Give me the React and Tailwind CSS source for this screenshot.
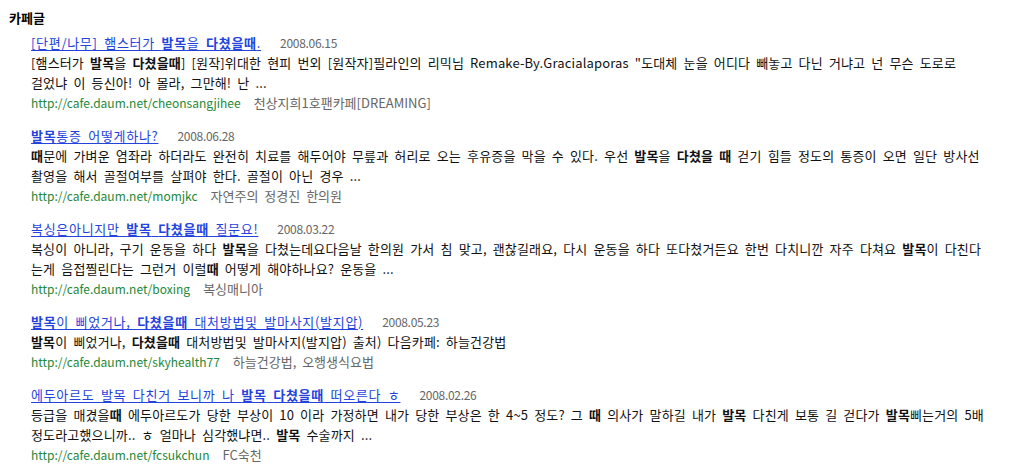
import React from "react";

const B = ({ children }) => <b className="font-bold">{children}</b>;

const items = [
  {
    title: (
      <>
        [단편/나무] 햄스터가 <B>발목</B>을 <B>다쳤을때</B>.
      </>
    ),
    date: "2008.06.15",
    lines: [
      <>
        [햄스터가 <B>발목</B>을 <B>다쳤을때</B>] [원작]위대한 현피 번외 [원작자]필라인의 리믹님 Remake-By.Gracialaporas "도대체 눈을 어디다 빼놓고 다닌 거냐고 넌 무슨 도로로
      </>,
      <>걸었냐 이 등신아! 아 몰라, 그만해! 난 ...</>,
    ],
    url: "http://cafe.daum.net/cheonsangjihee",
    cafe: "천상지희1호팬카페[DREAMING]",
  },
  {
    title: (
      <>
        <B>발목</B>통증 어떻게하나?
      </>
    ),
    date: "2008.06.28",
    lines: [
      <>
        <B>때</B>문에 가벼운 염좌라 하더라도 완전히 치료를 해두어야 무릎과 허리로 오는 후유증을 막을 수 있다. 우선 <B>발목</B>을 <B>다쳤을 때</B> 걷기 힘들 정도의 통증이 오면 일단 방사선
      </>,
      <>촬영을 해서 골절여부를 살펴야 한다. 골절이 아닌 경우 ...</>,
    ],
    url: "http://cafe.daum.net/momjkc",
    cafe: "자연주의 정경진 한의원",
  },
  {
    title: (
      <>
        복싱은아니지만 <B>발목</B> <B>다쳤을때</B> 질문요!
      </>
    ),
    date: "2008.03.22",
    lines: [
      <>
        복싱이 아니라, 구기 운동을 하다 <B>발목</B>을 다쳤는데요다음날 한의원 가서 침 맞고, 괜찮길래요, 다시 운동을 하다 또다쳤거든요 한번 다치니깐 자주 다쳐요 <B>발목</B>이 다친다
      </>,
      <>
        는게 음접찔린다는 그런거 이럴<B>때</B> 어떻게 해야하나요? 운동을 ...
      </>,
    ],
    url: "http://cafe.daum.net/boxing",
    cafe: "복싱매니아",
  },
  {
    title: (
      <>
        <B>발목</B>이 삐었거나, <B>다쳤을때</B> 대처방법및 발마사지(발지압)
      </>
    ),
    date: "2008.05.23",
    lines: [
      <>
        <B>발목</B>이 삐었거나, <B>다쳤을때</B> 대처방법및 발마사지(발지압) 출처) 다음카페: 하늘건강법
      </>,
    ],
    url: "http://cafe.daum.net/skyhealth77",
    cafe: "하늘건강법, 오행생식요법",
  },
  {
    title: (
      <>
        에두아르도 발목 다친거 보니까 나 <B>발목</B> <B>다쳤을때</B> 떠오른다 ㅎ
      </>
    ),
    date: "2008.02.26",
    lines: [
      <>
        등급을 매겼을<B>때</B> 에두아르도가 당한 부상이 10 이라 가정하면 내가 당한 부상은 한 4~5 정도? 그 <B>때</B> 의사가 말하길 내가 <B>발목</B> 다친게 보통 길 걷다가 <B>발목</B>삐는거의 5배
      </>,
      <>
        정도라고했으니까.. ㅎ 얼마나 심각했냐면.. <B>발목</B> 수술까지 ...
      </>,
    ],
    url: "http://cafe.daum.net/fcsukchun",
    cafe: "FC숙천",
  },
];

export default function App() {
  return (
    <div
      className="w-[1011px] h-[467px] bg-white pt-[8px] pl-[9px] text-[13px] text-[#111] overflow-hidden"
      style={{ fontFamily: '"Noto Sans CJK KR", "Noto Sans", sans-serif' }}
    >
      <h2 className="text-[13px] font-bold leading-[20px] text-black">카페글</h2>

      <ul className="mt-[5px] pl-[22px] flex flex-col gap-[13px]">
        {items.map((it, i) => (
          <li key={i} className="leading-[20px]">
            <div className="flex items-baseline whitespace-nowrap">
              <a
                href="#"
                className="text-[#2443dc] underline underline-offset-2 tracking-[0.7px] [word-spacing:3px]"
              >
                {it.title}
              </a>
              <span className="ml-[19px] text-[12px] text-[#666] tracking-tight">{it.date}</span>
            </div>
            {it.lines.map((l, j) => (
              <div key={j} className="whitespace-nowrap tracking-[0.15px] [word-spacing:3px]">
                {l}
              </div>
            ))}
            <div className="flex items-baseline whitespace-nowrap">
              <span className="text-[12px] text-[#24883a]">{it.url}</span>
              <span className="ml-[13px] text-[#666] [word-spacing:3px]">{it.cafe}</span>
            </div>
          </li>
        ))}
      </ul>
    </div>
  );
}
